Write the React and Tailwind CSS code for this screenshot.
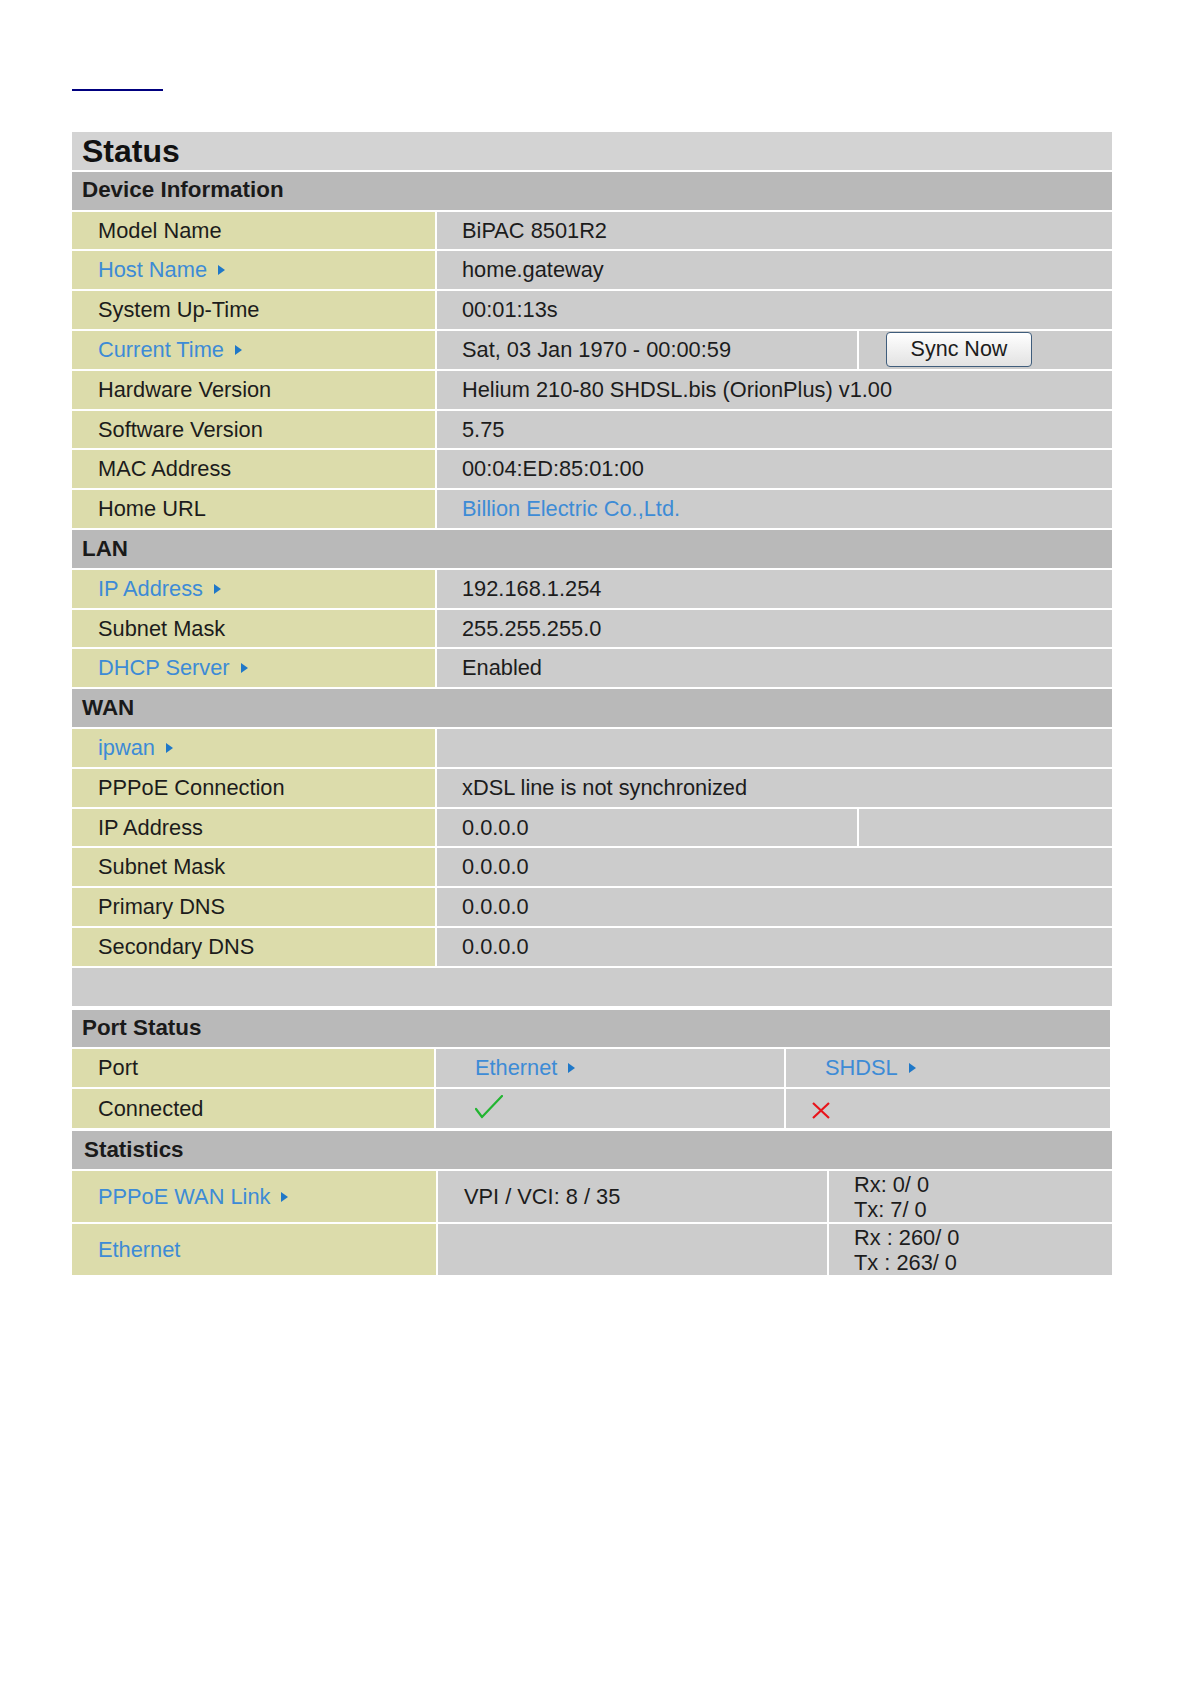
import React from 'react'

const font = { fontFamily: '"Liberation Sans", Arial, sans-serif' }

function Tri() {
  return (
    <svg width="7" height="10" viewBox="0 0 7 10" className="inline-block ml-[11px] shrink-0">
      <polygon points="0,0 7,5 0,10" fill="#1f78c8" />
    </svg>
  )
}

function Label({ text, link, arrow }) {
  return (
    <span className={`flex items-center ${link ? 'text-[#3d8bd6]' : 'text-[#1c1c1c]'}`}>
      {text}
      {arrow && <Tri />}
    </span>
  )
}

function Row({ label, link, arrow = link, value, valueLink, split, extra }) {
  return (
    <div className="flex gap-[2px] h-[37.8px]">
      <div className="w-[363px] shrink-0 bg-[#dcdcab] flex items-center pl-[26px]">
        <Label text={label} link={link} arrow={arrow} />
      </div>
      {split ? (
        <>
          <div className="w-[420px] shrink-0 bg-[#cccccc] flex items-center pl-[25px] text-[#1c1c1c]">{value}</div>
          <div className="flex-1 bg-[#cccccc] flex items-center pl-[27px]">{extra}</div>
        </>
      ) : (
        <div className={`flex-1 bg-[#cccccc] flex items-center pl-[25px] ${valueLink ? 'text-[#3d8bd6]' : 'text-[#1c1c1c]'}`}>
          {value}
        </div>
      )}
    </div>
  )
}

function Header({ children, className = '' }) {
  return (
    <div className={`h-[37.8px] bg-[#b9b9b9] flex items-center pl-[10px] font-bold text-[22.4px] text-[#1a1a1a] ${className}`}>
      {children}
    </div>
  )
}

export default function App() {
  return (
    <div className="min-h-[1684px] bg-white text-[21.8px] leading-none" style={font}>
      <div className="pl-[72px] pt-[89px]">
        <div className="w-[91px] h-[2px] bg-[#00007f]" />
      </div>

      <div className="ml-[72px] mt-[41px] w-[1040px] flex flex-col gap-[2px]">
        <div className="h-[37.8px] bg-[#d3d3d3] flex items-center pl-[10px] font-bold text-[32px] text-[#111]">Status</div>
        <Header>Device Information</Header>
        <Row label="Model Name" value="BiPAC 8501R2" />
        <Row label="Host Name" link value="home.gateway" />
        <Row label="System Up-Time" value="00:01:13s" />
        <Row
          label="Current Time"
          link
          split
          value="Sat, 03 Jan 1970 - 00:00:59"
          extra={
            <button className="w-[146px] h-[35px] rounded-[4px] border-[1.5px] border-[#3f5d7c] bg-gradient-to-b from-white to-[#e2e2e2] text-[21.5px] text-[#1c1c1c]">
              Sync Now
            </button>
          }
        />
        <Row label="Hardware Version" value="Helium 210-80 SHDSL.bis (OrionPlus) v1.00" />
        <Row label="Software Version" value="5.75" />
        <Row label="MAC Address" value="00:04:ED:85:01:00" />
        <Row label="Home URL" value="Billion Electric Co.,Ltd." valueLink />
        <Header>LAN</Header>
        <Row label="IP Address" link value="192.168.1.254" />
        <Row label="Subnet Mask" value="255.255.255.0" />
        <Row label="DHCP Server" link value="Enabled" />
        <Header>WAN</Header>
        <Row label="ipwan" link value="" />
        <Row label="PPPoE Connection" value="xDSL line is not synchronized" />
        <Row label="IP Address" split value="0.0.0.0" />
        <Row label="Subnet Mask" value="0.0.0.0" />
        <Row label="Primary DNS" value="0.0.0.0" />
        <Row label="Secondary DNS" value="0.0.0.0" />
        <div className="h-[37.8px] bg-[#cccccc]" />
      </div>

      <div className="ml-[72px] mt-[4px] w-[1038px] flex flex-col gap-[2px]">
        <Header>Port Status</Header>
        <div className="flex gap-[2px] h-[38px]">
          <div className="w-[362px] shrink-0 bg-[#dcdcab] flex items-center pl-[26px] text-[#1c1c1c]">Port</div>
          <div className="w-[348px] shrink-0 bg-[#cccccc] flex items-center pl-[39px]">
            <Label text="Ethernet" link arrow />
          </div>
          <div className="flex-1 bg-[#cccccc] flex items-center pl-[39px]">
            <Label text="SHDSL" link arrow />
          </div>
        </div>
        <div className="flex gap-[2px] h-[39px]">
          <div className="w-[362px] shrink-0 bg-[#dcdcab] flex items-center pl-[26px] text-[#1c1c1c]">Connected</div>
          <div className="w-[348px] shrink-0 bg-[#cccccc] flex items-center pl-[39px]">
            <svg width="28" height="24" viewBox="0 0 28 24" className="mb-[4px]">
              <path d="M1 14 L7 22 L27 1" fill="none" stroke="#22b531" strokeWidth="2.2" strokeLinecap="round" strokeLinejoin="round" />
            </svg>
          </div>
          <div className="flex-1 bg-[#cccccc] flex items-center pl-[26px]">
            <svg width="18" height="17" viewBox="0 0 18 17" className="mt-[3px]">
              <path d="M1 1 L17 16 M17 1 L1 16" fill="none" stroke="#e8141b" strokeWidth="2.2" />
            </svg>
          </div>
        </div>
      </div>

      <div className="ml-[72px] mt-[3px] w-[1040px] flex flex-col gap-[2px]">
        <Header className="pl-[12px]">Statistics</Header>
        <div className="flex gap-[2px] h-[51px]">
          <div className="w-[364px] shrink-0 bg-[#dcdcab] flex items-center pl-[26px]">
            <Label text="PPPoE WAN Link" link arrow />
          </div>
          <div className="w-[389px] shrink-0 bg-[#cccccc] flex items-center pl-[26px] text-[#1c1c1c]">VPI / VCI: 8 / 35</div>
          <div className="flex-1 bg-[#cccccc] flex flex-col justify-center pl-[25px] text-[#1c1c1c] leading-[25px]">
            <span>Rx: 0/ 0</span>
            <span>Tx: 7/ 0</span>
          </div>
        </div>
        <div className="flex gap-[2px] h-[51px]">
          <div className="w-[364px] shrink-0 bg-[#dcdcab] flex items-center pl-[26px]">
            <Label text="Ethernet" link />
          </div>
          <div className="w-[389px] shrink-0 bg-[#cccccc]" />
          <div className="flex-1 bg-[#cccccc] flex flex-col justify-center pl-[25px] text-[#1c1c1c] leading-[25px]">
            <span>Rx : 260/ 0</span>
            <span>Tx : 263/ 0</span>
          </div>
        </div>
      </div>
    </div>
  )
}
